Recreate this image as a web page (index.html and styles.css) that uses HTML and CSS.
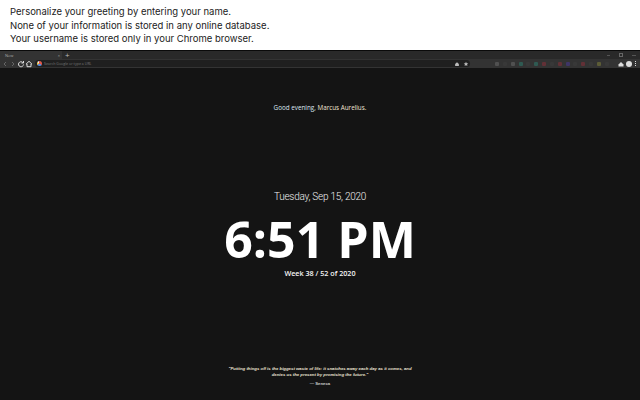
FILE: index.html
```html
<!DOCTYPE html>
<html lang="en">
<head>
    <meta charset="UTF-8">
    <title>New Tab</title>
    <link rel="stylesheet" href="styles.css">
</head>
<body>
    <div class="intro">
        <p>Personalize your greeting by entering your name.</p>
        <p>None of your information is stored in any online database.</p>
        <p>Your username is stored only in your Chrome browser.</p>
    </div>

    <!-- Browser window -->
    <div class="tabstrip">
        <div class="tab">
            <span class="tab-title">New</span>
            <span class="tab-close">×</span>
        </div>
        <span class="tab-new">+</span>
        <div class="window-btns">
            <span class="win-min"></span>
            <span class="win-max"></span>
            <span class="win-close"></span>
        </div>
    </div>
    <div class="toolbar">
        <svg class="tool" viewBox="0 0 8 8"><path d="M5 2 3 4l2 2" fill="none" stroke="#666" stroke-width="1"/></svg>
        <svg class="tool" viewBox="0 0 8 8"><path d="M3 2l2 2-2 2" fill="none" stroke="#666" stroke-width="1"/></svg>
        <svg class="tool" viewBox="0 0 8 8"><path d="M5.800 2.500A2.500 2.500 0 1 0 6.500 4.500M6.500 1v2H4.500" fill="none" stroke="#ddd" stroke-width="1"/></svg>
        <svg class="tool" viewBox="0 0 8 8"><path d="M4 1.300 6.800 4H6v2.700H2V4H1.200z" fill="none" stroke="#ddd" stroke-width="1"/></svg>
        <div class="omnibox">
            <span class="g-logo"></span>
            <span class="omni-text">Search Google or type a URL</span>
            <svg class="omni-icon" viewBox="0 0 8 8"><path d="M4 1.500 6.500 4v2.500h-5V4z" fill="#bbb"/></svg>
            <svg class="omni-icon" viewBox="0 0 8 8"><path d="M4 1l.9 2 2.100.2-1.600 1.400.5 2L4 5.500 2.100 6.600l.5-2L1 3.200 3.100 3z" fill="#bbb"/></svg>
        </div>
        <div class="extensions">
            <span class="ext ext-grey"></span>
            <span class="ext ext-dim"></span>
            <span class="ext ext-grey"></span>
            <span class="ext ext-teal"></span>
            <span class="ext ext-dim"></span>
            <span class="ext ext-teal"></span>
            <span class="ext ext-red"></span>
            <span class="ext ext-dim"></span>
            <span class="ext ext-red"></span>
            <span class="ext ext-purple"></span>
            <span class="ext ext-dim"></span>
            <span class="ext ext-red"></span>
            <span class="ext ext-dim"></span>
            <span class="ext ext-olive"></span>
            <span class="ext ext-dim"></span>
        </div>
        <svg class="tool" viewBox="0 0 8 8"><path d="M1.500 4.500 4 2l2.500 2.500V6.500h-5z" fill="#ddd"/></svg>
        <span class="avatar"></span>
        <span class="menu-dots"></span>
    </div>

    <main class="page">
        <div class="greeting">Good evening, <span class="name">Marcus Aurelius.</span></div>
        <div class="clock-block">
            <div class="date">Tuesday, Sep 15, 2020</div>
            <div class="clock">6:51 PM</div>
            <div class="week">Week 38 / 52 of 2020</div>
        </div>
        <div class="quote">
            <p class="quote-text">"Putting things off is the biggest waste of life: it snatches away each day as it comes, and denies us the present by promising the future."</p>
            <p class="quote-author">— Seneca</p>
        </div>
    </main>
</body>
</html>
```

FILE: styles.css
```css
html, body {
    margin: 0;
    padding: 0;
}

body {
    width: 640px;
    height: 400px;
    overflow: hidden;
    display: flex;
    flex-direction: column;
    background-color: #141414;
    font-family: "Open Sans", sans-serif;
}

/* White caption on top */
.intro {
    height: 50px;
    box-sizing: border-box;
    padding-top: 5px;
    padding-left: 10px;
    background-color: #fff;
    color: #222;
    font-family: "Inter", sans-serif;
    font-size: 9.500px;
    line-height: 13.500px;
}

.intro p {
    margin: 0;
}

/* Browser chrome */
.tabstrip {
    height: 9px;
    display: flex;
    align-items: center;
    background-color: #292929;
    border-top: 1px solid #0a0a0a;
    box-sizing: border-box;
    color: #aaa;
}

.tab {
    width: 62px;
    height: 100%;
    display: flex;
    align-items: center;
    justify-content: space-between;
    padding: 0 2px 0 5px;
    box-sizing: border-box;
    background-color: #333;
    font-size: 4px;
}

.tab-new {
    margin-left: 3px;
    font-size: 8px;
    line-height: 8px;
    color: #bbb;
}

.window-btns {
    margin-left: auto;
    margin-right: 4px;
    display: flex;
    align-items: center;
    gap: 9px;
}

.window-btns span {
    display: block;
}

.win-min {
    width: 3px;
    height: 1px;
    background-color: #555;
}

.win-max {
    width: 2px;
    height: 2px;
    border: 1px solid #666;
}

.win-close {
    width: 4px;
    height: 1px;
    background-color: #555;
}

.toolbar {
    height: 9px;
    display: flex;
    align-items: center;
    padding: 0 3px 0 1px;
    background-color: #333;
}

.tool {
    width: 8px;
    height: 8px;
    flex: none;
}

.omnibox {
    width: 435px;
    height: 7px;
    margin-left: 2px;
    flex: none;
    display: flex;
    align-items: center;
    gap: 2px;
    padding-left: 2px;
    box-sizing: border-box;
    background-color: #1f1f1f;
    border-radius: 4px;
}

.g-logo {
    width: 5px;
    height: 5px;
    border-radius: 50%;
    background: conic-gradient(#e0584a 0 35%, #5b8fe0 35% 65%, #e8c75a 65% 85%, #eee 85%);
}

.omni-text {
    flex: 1;
    color: #777;
    font-size: 3.600px;
}

.omni-icon {
    width: 6px;
    height: 6px;
    margin-right: 1px;
}

.extensions {
    flex: 1;
    display: flex;
    align-items: center;
    justify-content: space-between;
    padding: 0 8px 0 25px;
}

.ext {
    width: 4px;
    height: 4px;
    border-radius: 1px;
}

.ext-grey { background-color: #505050; }
.ext-dim { background-color: #383838; }
.ext-teal { background-color: #2f5a52; }
.ext-red { background-color: #623036; }
.ext-purple { background-color: #3e3566; }
.ext-olive { background-color: #5c5c36; }

.avatar {
    width: 6px;
    height: 6px;
    margin-left: 1px;
    flex: none;
    border-radius: 50%;
    background-color: #ddd;
}

.menu-dots {
    width: 1px;
    height: 1px;
    flex: none;
    margin: 0 1px 0 3px;
    background-color: #ddd;
    box-shadow: 0 -2px 0 #ddd, 0 2px 0 #ddd;
}

/* New tab page */
.page {
    flex: 1;
    display: flex;
    flex-direction: column;
    align-items: center;
    color: #fff;
    text-align: center;
}

.greeting {
    margin-top: 34px;
    font-size: 6.300px;
    line-height: 11px;
    color: #dde6f2;
}

.name {
    color: #f2e4d6;
}

.clock-block {
    margin-top: 77px;
}

.date {
    font-family: "Roboto", sans-serif;
    font-size: 10px;
    line-height: 13px;
    font-weight: 300;
    letter-spacing: -0.250px;
    color: #f0f0f0;
}

.clock {
    margin-top: 9px;
    font-size: 50px;
    line-height: 54px;
    font-weight: 700;
}

.week {
    margin-top: 1px;
    font-size: 7.200px;
    line-height: 12px;
    font-weight: 600;
    color: #f4f4f4;
}

.quote {
    margin-top: auto;
    margin-bottom: 13px;
    width: 186px;
    font-family: "Liberation Sans", sans-serif;
    font-size: 4.300px;
    line-height: 6px;
}

.quote p {
    margin: 0;
}

.quote-text {
    font-style: italic;
    font-weight: 700;
    color: #e8e0d0;
}

.quote .quote-author {
    margin-top: 3px;
    font-weight: 700;
    color: #ccc;
}
```
